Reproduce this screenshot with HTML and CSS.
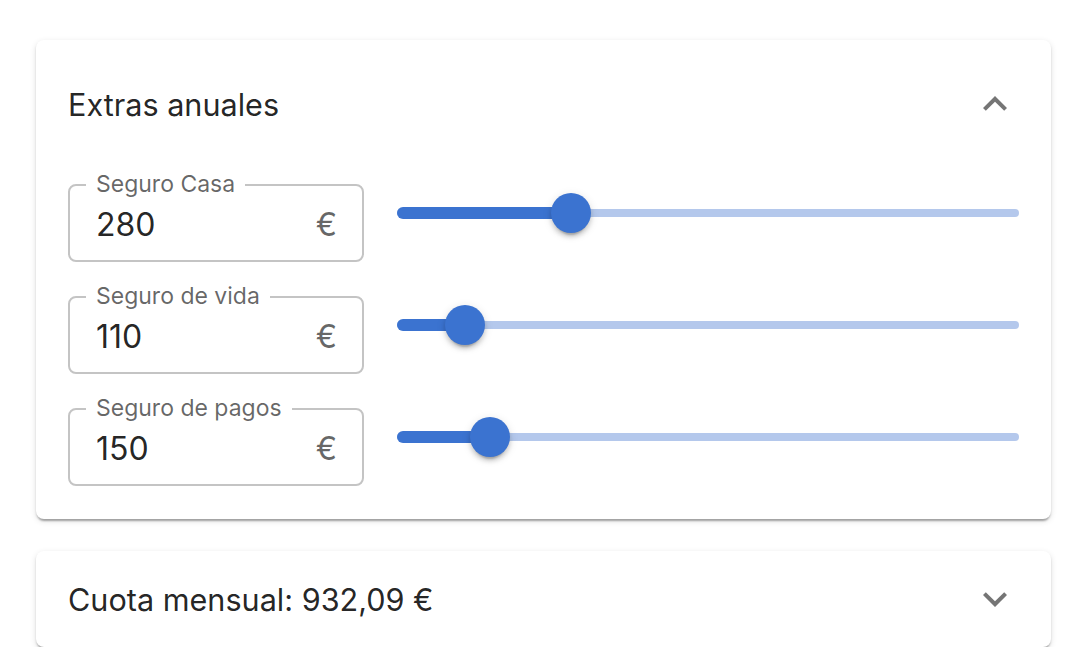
FILE: index.html
```html
<!DOCTYPE html>
<html lang="es">
<head>
<meta charset="utf-8">
<title>Extras anuales</title>
<link rel="stylesheet" href="styles.css">
</head>
<body>
<main class="page">
  <section class="card">
    <div class="summary">
      <h2 class="summary-title">Extras anuales</h2>
      <svg class="chevron" viewBox="0 0 24 24" width="48" height="48"><path d="M12 8l-6 6 1.41 1.41L12 10.83l4.59 4.58L18 14z"/></svg>
    </div>
    <div class="details">
      <div class="row">
        <div class="field">
          <span class="field-label">Seguro Casa</span>
          <span class="field-value">280</span>
          <span class="field-unit">€</span>
        </div>
        <div class="slider">
          <div class="rail"></div>
          <div class="track" style="width: 28%"></div>
          <div class="thumb" style="left: 28%"></div>
        </div>
      </div>
      <div class="row">
        <div class="field">
          <span class="field-label">Seguro de vida</span>
          <span class="field-value">110</span>
          <span class="field-unit">€</span>
        </div>
        <div class="slider">
          <div class="rail"></div>
          <div class="track" style="width: 11%"></div>
          <div class="thumb" style="left: 11%"></div>
        </div>
      </div>
      <div class="row">
        <div class="field">
          <span class="field-label">Seguro de pagos</span>
          <span class="field-value">150</span>
          <span class="field-unit">€</span>
        </div>
        <div class="slider">
          <div class="rail"></div>
          <div class="track" style="width: 15%"></div>
          <div class="thumb" style="left: 15%"></div>
        </div>
      </div>
    </div>
  </section>
  <section class="card">
    <div class="summary summary-collapsed">
      <h2 class="summary-title">Cuota mensual: 932,09 €</h2>
      <svg class="chevron" viewBox="0 0 24 24" width="48" height="48"><path d="M16.59 8.59 12 13.17 7.41 8.59 6 10l6 6 6-6z"/></svg>
    </div>
  </section>
</main>
</body>
</html>
```

FILE: styles.css
```css
* { box-sizing: border-box; }
html, body { margin: 0; padding: 0; background: #fff; }
body {
  font-family: Inter, "Noto Sans", "Liberation Sans", sans-serif;
  color: rgba(0, 0, 0, 0.87);
}
.page {
  padding: 40px 29px 0 36px;
  display: flex;
  flex-direction: column;
  gap: 32px;
}
.card {
  background: #fff;
  border-radius: 8px;
  box-shadow: 0 4px 2px -2px rgba(0,0,0,0.2), 0 2px 2px 0 rgba(0,0,0,0.14), 0 2px 6px 0 rgba(0,0,0,0.12);
}
.summary {
  height: 128px;
  padding: 0 32px;
  display: flex;
  align-items: center;
  justify-content: space-between;
}
.summary-collapsed { height: 96px; }
.summary-title {
  margin: 0;
  font-size: 30.6px;
  font-weight: 400;
  letter-spacing: 0;
}
.chevron { fill: rgba(0, 0, 0, 0.54); display: block; }
.details {
  padding: 16px 32px 33px;
  display: flex;
  flex-direction: column;
  gap: 34px;
}
.row {
  display: flex;
  align-items: flex-start;
  gap: 33px;
}
.field {
  position: relative;
  width: 296px;
  height: 78px;
  flex: none;
  border: 2px solid #c4c4c4;
  border-radius: 8px;
  padding: 3px 25px 0 26px;
  display: flex;
  align-items: center;
  justify-content: space-between;
}
.field-label {
  position: absolute;
  left: 16px;
  top: -16px;
  padding: 0 10px;
  background: #fff;
  font-size: 23px;
  line-height: 28px;
  color: rgba(0, 0, 0, 0.6);
}
.field-value { font-size: 32px; line-height: 40px; }
.field-unit { font-size: 32px; line-height: 40px; color: rgba(0, 0, 0, 0.6); }
.slider {
  position: relative;
  flex: 1;
  height: 58px;
}
.rail {
  position: absolute;
  left: 0; right: 0; top: 25px;
  height: 8px;
  border-radius: 4px;
  background: #b4c8ec;
}
.track {
  position: absolute;
  left: 0; top: 23px;
  height: 12px;
  border-radius: 6px;
  background: #3b73d0;
}
.thumb {
  position: absolute;
  top: 9px;
  width: 40px;
  height: 40px;
  margin-left: -20px;
  border-radius: 50%;
  background: #3b73d0;
  box-shadow: 0 6px 2px -4px rgba(0,0,0,0.2), 0 4px 4px 0 rgba(0,0,0,0.14), 0 2px 10px 0 rgba(0,0,0,0.12);
}
```
